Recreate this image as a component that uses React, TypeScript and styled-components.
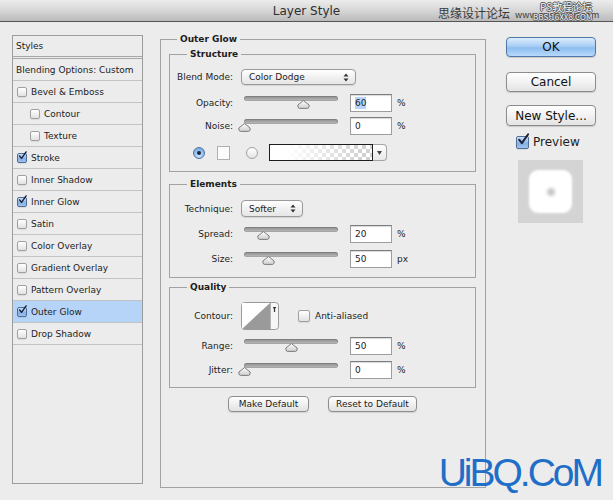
import React from "react";
import styled, { createGlobalStyle } from "styled-components";

const GlobalStyle = createGlobalStyle`
  html, body {
    margin: 0;
    padding: 0;
    background: #ececec;
  }
  body {
    font-family: "DejaVu Sans", "Noto Sans CJK SC", sans-serif;
  }
`;

const Window = styled.div`
  position: relative;
  width: 613px;
  height: 500px;
  background: #ececec;
  overflow: hidden;
  display: flex;
  flex-direction: column;
  font-family: "DejaVu Sans", "Noto Sans CJK SC", sans-serif;
  font-size: 9px;
  color: #1c1c1c;
`;

const TitleBar = styled.div`
  position: relative;
  flex: none;
  height: 21px;
  display: flex;
  align-items: center;
  justify-content: center;
  background: linear-gradient(#ececec, #d4d4d4 55%, #bababa);
  border-bottom: 1px solid #555;
  font-size: 12px;
  color: #2e2e2e;
`;

const MarkText = styled.span<{ $x: number; $y: number; $size: number; $outline?: boolean }>`
  position: absolute;
  left: ${(p) => p.$x}px;
  top: ${(p) => p.$y}px;
  font-size: ${(p) => p.$size}px;
  line-height: 1;
  white-space: nowrap;
  color: ${(p) => (p.$outline ? "#f4f4f4" : "#3a3a3a")};
  text-shadow: ${(p) =>
    p.$outline
      ? "1px 0 0 #555, -1px 0 0 #555, 0 1px 0 #555, 0 -1px 0 #555"
      : "none"};
  font-family: "Noto Sans CJK SC", "DejaVu Sans", sans-serif;
`;

const Body = styled.div`
  flex: 1;
  display: flex;
  align-items: flex-start;
  padding-left: 12px;
`;

/* ---------- left list ---------- */

const StylesList = styled.div`
  margin-top: 13px;
  width: 131px;
  height: 449px;
  box-sizing: border-box;
  border: 1px solid #9c9c9c;
  display: flex;
  flex-direction: column;
`;

const ListHeader = styled.div`
  height: 23px;
  box-sizing: border-box;
  border-bottom: 3px double #a8a8a8;
  display: flex;
  align-items: center;
  padding-left: 3px;
`;

const ListItem = styled.div<{ $indent?: boolean; $active?: boolean }>`
  height: 22px;
  box-sizing: border-box;
  border-bottom: 1px solid #c3c3c3;
  display: flex;
  align-items: center;
  gap: 4px;
  padding-left: ${(p) => (p.$indent ? 17 : 4)}px;
  background: ${(p) => (p.$active ? "#b6d4f7" : "transparent")};
`;

const PlainItem = styled(ListItem)`
  padding-left: 3px;
`;

const CheckBox = styled.span<{ $checked?: boolean; $size: number }>`
  position: relative;
  flex: none;
  width: ${(p) => p.$size}px;
  height: ${(p) => p.$size}px;
  box-sizing: border-box;
  border-radius: 2px;
  border: 1px solid ${(p) => (p.$checked ? "#4d6e98" : "#a0a0a0")};
  background: ${(p) =>
    p.$checked
      ? "linear-gradient(#cfe2f8, #86b0e2 60%, #9fc3ee)"
      : "linear-gradient(#ffffff, #e2e2e2)"};
  box-shadow: 0 1px 1px rgba(0, 0, 0, 0.08);
`;

const CheckMark = styled.svg`
  position: absolute;
  left: 0;
  top: -30%;
  width: 115%;
  height: 115%;
  overflow: visible;
  path {
    fill: none;
    stroke: #18223a;
    stroke-width: 1.9;
    stroke-linecap: round;
    stroke-linejoin: round;
  }
`;

const Check = ({ checked, size = 10 }: { checked?: boolean; size?: number }) => (
  <CheckBox $checked={checked} $size={size}>
    {checked && (
      <CheckMark viewBox="0 0 12 12">
        <path d="M2 6.4 L4.6 9.6 L10.6 1.2" />
      </CheckMark>
    )}
  </CheckBox>
);

/* ---------- main panel ---------- */

const OuterGroup = styled.fieldset`
  margin: 12px 0 0 17px;
  width: 326px;
  height: 454px;
  box-sizing: border-box;
  border: 1px solid #a2a2a2;
  padding: 4px 9px 0 8px;
  min-width: 0;
`;

const Group = styled.fieldset<{ $top: number; $pt: number; $pb: number }>`
  margin: ${(p) => p.$top}px 0 0 0;
  border: 1px solid #a2a2a2;
  padding: ${(p) => p.$pt}px 0 ${(p) => p.$pb}px 0;
  min-width: 0;
`;

const Legend = styled.legend<{ $offset: number }>`
  font-weight: bold;
  line-height: 11px;
  padding: 0 3px;
  margin-left: ${(p) => p.$offset}px;
`;

const Row = styled.div<{ $top?: number }>`
  display: flex;
  align-items: center;
  margin-top: ${(p) => p.$top ?? 0}px;
`;

const Label = styled.span`
  width: 63px;
  margin-right: 8px;
  text-align: right;
  flex: none;
`;

const Popup = styled.div<{ $w: number; $h: number }>`
  width: ${(p) => p.$w}px;
  height: ${(p) => p.$h}px;
  box-sizing: border-box;
  border: 1px solid #9a9a9a;
  border-radius: 4px;
  background: linear-gradient(#ffffff, #f1f1f1 50%, #e6e6e6);
  box-shadow: 0 1px 1px rgba(0, 0, 0, 0.1);
  display: flex;
  align-items: center;
  justify-content: space-between;
  padding: 0 6px 0 7px;
`;

const UpDown = () => (
  <svg width="6" height="9" viewBox="0 0 6 9">
    <path d="M3 0.5 L5.5 3.5 L0.5 3.5 Z M3 8.5 L5.5 5.5 L0.5 5.5 Z" fill="#333" />
  </svg>
);

const SliderBox = styled.div`
  position: relative;
  flex: none;
  width: 94px;
  height: 18px;
  margin-left: 3px;
`;

const Track = styled.div`
  position: absolute;
  left: 0;
  right: 0;
  top: 2px;
  height: 5px;
  border-radius: 3px;
  background: linear-gradient(#8c8c8c, #a9a9a9 60%, #c4c4c4);
  box-shadow: inset 0 0 0 1px rgba(0, 0, 0, 0.12);
`;

const Thumb = styled.svg`
  position: absolute;
  top: 6px;
  width: 13px;
  height: 9px;
  margin-left: -6px;
`;

const Slider = ({ at }: { at: number }) => (
  <SliderBox>
    <Track />
    <Thumb viewBox="0 0 13 9" style={{ left: `${at * 100}%` }}>
      <defs>
        <linearGradient id="thumbFill" x1="0" y1="0" x2="0" y2="1">
          <stop offset="0" stopColor="#ffffff" />
          <stop offset="1" stopColor="#cdcdcd" />
        </linearGradient>
      </defs>
      <path
        d="M6.5 0.6 L12.2 5 Q12.4 8.4 10.5 8.4 L2.5 8.4 Q0.6 8.4 0.8 5 Z"
        fill="url(#thumbFill)"
        stroke="#727272"
        strokeWidth="0.9"
      />
    </Thumb>
  </SliderBox>
);

const ValueBox = styled.div`
  flex: none;
  width: 42px;
  height: 18px;
  margin-left: 12px;
  box-sizing: border-box;
  background: #fff;
  border: 1px solid #9d9d9d;
  border-top-color: #7c7c7c;
  box-shadow: inset 0 1px 1px rgba(0, 0, 0, 0.15);
  display: flex;
  align-items: center;
  padding-left: 4px;
`;

const Selected = styled.span`
  background: #b5d4fb;
  padding: 1px 0;
`;

const Unit = styled.span`
  margin-left: 5px;
`;

const Radio = styled.span<{ $on?: boolean; $lead: number }>`
  position: relative;
  flex: none;
  width: 12px;
  height: 12px;
  margin-left: ${(p) => p.$lead}px;
  box-sizing: border-box;
  border-radius: 50%;
  border: 1px solid ${(p) => (p.$on ? "#4f729e" : "#a0a0a0")};
  background: ${(p) =>
    p.$on
      ? "radial-gradient(circle at 50% 75%, #cfe6ff, #7fb0e6 70%)"
      : "linear-gradient(#ffffff, #e4e4e4)"};
  &::after {
    content: "";
    display: ${(p) => (p.$on ? "block" : "none")};
    position: absolute;
    left: 3px;
    top: 3px;
    width: 4px;
    height: 4px;
    border-radius: 50%;
    background: #1b2740;
  }
`;

const Swatch = styled.span`
  flex: none;
  width: 13px;
  height: 14px;
  margin-left: 12px;
  box-sizing: border-box;
  border: 1px solid #b0b0b0;
  background: #fbfbfb;
`;

const GradientBar = styled.span`
  flex: none;
  width: 104px;
  height: 17px;
  margin-left: 11px;
  box-sizing: border-box;
  border: 1px solid #1e1e1e;
  background-image: linear-gradient(to right, #ffffff 15%, rgba(255, 255, 255, 0) 90%),
    repeating-conic-gradient(#d2d2d2 0 25%, #ffffff 0 50%);
  background-size: 100% 100%, 8px 8px;
`;

const GradientArrow = styled.span`
  flex: none;
  width: 14px;
  height: 17px;
  box-sizing: border-box;
  border: 1px solid #a4a4a4;
  border-left: none;
  border-radius: 0 4px 4px 0;
  background: linear-gradient(#ffffff, #e8e8e8);
  display: flex;
  align-items: center;
  justify-content: center;
`;

const SmallDown = () => (
  <svg width="5" height="4" viewBox="0 0 5 4">
    <path d="M0 0 L5 0 L2.5 4 Z" fill="#444" />
  </svg>
);

const ContourIcon = () => (
  <svg width="38" height="28" viewBox="0 0 38 28">
    <rect x="0.5" y="0.5" width="37" height="27" rx="3" fill="#f6f6f6" stroke="#9a9a9a" />
    <rect x="1" y="1" width="28" height="26" fill="#ffffff" />
    <path d="M1 27 L29 1 L29 27 Z" fill="#9a9a9a" />
    <line x1="29.5" y1="1" x2="29.5" y2="27" stroke="#b4b4b4" />
    <path d="M33.5 5 L33.5 10" stroke="#333" strokeWidth="1.2" />
    <path d="M31.8 5 L35.2 5 L33.5 8 Z" fill="#333" />
  </svg>
);

const InlineCheck = styled.span`
  display: flex;
  align-items: center;
  gap: 5px;
  margin-left: 19px;
`;

const ButtonRow = styled.div`
  margin-top: 8px;
  display: flex;
  justify-content: center;
  gap: 19px;
`;

const SmallButton = styled.button<{ $w: number }>`
  width: ${(p) => p.$w}px;
  height: 16px;
  padding: 0;
  font: inherit;
  color: inherit;
  border: 1px solid #8e8e8e;
  border-radius: 4px;
  background: linear-gradient(#ffffff, #f0f0f0 50%, #e2e2e2);
  box-shadow: 0 1px 1px rgba(0, 0, 0, 0.12);
`;

/* ---------- right column ---------- */

const SideColumn = styled.div`
  margin: 15px 0 0 20px;
  width: 90px;
  display: flex;
  flex-direction: column;
`;

const DialogButton = styled.button<{ $primary?: boolean; $top: number; $h?: number }>`
  margin-top: ${(p) => p.$top}px;
  width: 90px;
  height: ${(p) => p.$h ?? 20}px;
  padding: 0;
  font-family: "DejaVu Sans", sans-serif;
  font-size: 12px;
  color: #111;
  border-radius: 4px;
  border: 1px solid ${(p) => (p.$primary ? "#4f76a6" : "#8c8c8c")};
  background: ${(p) =>
    p.$primary
      ? "linear-gradient(#dcecfc, #a9cff5 45%, #8cbdf0 55%, #b8dafb)"
      : "linear-gradient(#ffffff, #f2f2f2 50%, #e4e4e4)"};
  box-shadow: 0 1px 1px rgba(0, 0, 0, 0.15);
`;

const PreviewToggle = styled.div`
  margin: 9px 0 0 10px;
  display: flex;
  align-items: center;
  gap: 4px;
  font-size: 12px;
`;

const PreviewBox = styled.div`
  margin: 11px 0 0 12px;
  width: 65px;
  height: 63px;
  background: #d4d4d4;
  display: flex;
  align-items: center;
  justify-content: center;
`;

const PreviewTile = styled.div`
  width: 43px;
  height: 43px;
  border-radius: 9px;
  background: #ffffff;
  filter: blur(1.2px);
  display: flex;
  align-items: center;
  justify-content: center;
`;

const PreviewDot = styled.div`
  width: 8px;
  height: 8px;
  border-radius: 50%;
  background: #c9c9c9;
  filter: blur(1px);
`;

const Watermark = styled.div`
  position: absolute;
  right: 12px;
  bottom: 8px;
  font-family: "Liberation Sans", Arial, sans-serif;
  font-size: 39px;
  letter-spacing: -3px;
  line-height: 1;
  color: #1f6ec8;
`;

const layers = [
  { name: "Bevel & Emboss" },
  { name: "Contour", indent: true },
  { name: "Texture", indent: true },
  { name: "Stroke", checked: true },
  { name: "Inner Shadow" },
  { name: "Inner Glow", checked: true },
  { name: "Satin" },
  { name: "Color Overlay" },
  { name: "Gradient Overlay" },
  { name: "Pattern Overlay" },
  { name: "Outer Glow", checked: true, active: true },
  { name: "Drop Shadow" },
];

export default function App() {
  return (
    <Window>
      <GlobalStyle />
      <TitleBar>
        Layer Style
        <MarkText $x={438} $y={7} $size={12}>
          思缘设计论坛
        </MarkText>
        <MarkText $x={515} $y={10} $size={9}>
          www.missyuan.com
        </MarkText>
        <MarkText $x={540} $y={2} $size={10} $outline>
          PS教程论坛
        </MarkText>
        <MarkText $x={533} $y={13} $size={8} $outline>
          BBS.16XX8.COM
        </MarkText>
      </TitleBar>
      <Body>
        <StylesList>
          <ListHeader>Styles</ListHeader>
          <PlainItem>Blending Options: Custom</PlainItem>
          {layers.map((l) => (
            <ListItem key={l.name} $indent={l.indent} $active={l.active}>
              <Check checked={l.checked} />
              {l.name}
            </ListItem>
          ))}
        </StylesList>

        <OuterGroup>
          <Legend $offset={8}>Outer Glow</Legend>

          <Group $top={0} $pt={9} $pb={10}>
            <Legend $offset={17}>Structure</Legend>
            <Row>
              <Label>Blend Mode:</Label>
              <Popup $w={115} $h={16}>
                Color Dodge
                <UpDown />
              </Popup>
            </Row>
            <Row $top={9}>
              <Label>Opacity:</Label>
              <Slider at={0.63} />
              <ValueBox>
                <Selected>60</Selected>
              </ValueBox>
              <Unit>%</Unit>
            </Row>
            <Row $top={5}>
              <Label>Noise:</Label>
              <Slider at={0} />
              <ValueBox>0</ValueBox>
              <Unit>%</Unit>
            </Row>
            <Row $top={9}>
              <Radio $on $lead={23} />
              <Swatch />
              <Radio $lead={16} />
              <GradientBar />
              <GradientArrow>
                <SmallDown />
              </GradientArrow>
            </Row>
          </Group>

          <Group $top={7} $pt={10} $pb={9}>
            <Legend $offset={17}>Elements</Legend>
            <Row>
              <Label>Technique:</Label>
              <Popup $w={62} $h={17}>
                Softer
                <UpDown />
              </Popup>
            </Row>
            <Row $top={8}>
              <Label>Spread:</Label>
              <Slider at={0.2} />
              <ValueBox>20</ValueBox>
              <Unit>%</Unit>
            </Row>
            <Row $top={7}>
              <Label>Size:</Label>
              <Slider at={0.25} />
              <ValueBox>50</ValueBox>
              <Unit>px</Unit>
            </Row>
          </Group>

          <Group $top={4} $pt={9} $pb={8}>
            <Legend $offset={17}>Quality</Legend>
            <Row>
              <Label>Contour:</Label>
              <ContourIcon />
              <InlineCheck>
                <Check size={12} />
                Anti-aliased
              </InlineCheck>
            </Row>
            <Row $top={7}>
              <Label>Range:</Label>
              <Slider at={0.5} />
              <ValueBox>50</ValueBox>
              <Unit>%</Unit>
            </Row>
            <Row $top={6}>
              <Label>Jitter:</Label>
              <Slider at={0} />
              <ValueBox>0</ValueBox>
              <Unit>%</Unit>
            </Row>
          </Group>

          <ButtonRow>
            <SmallButton $w={81}>Make Default</SmallButton>
            <SmallButton $w={89}>Reset to Default</SmallButton>
          </ButtonRow>
        </OuterGroup>

        <SideColumn>
          <DialogButton $primary $top={0}>
            OK
          </DialogButton>
          <DialogButton $top={15}>Cancel</DialogButton>
          <DialogButton $top={13} $h={21}>
            New Style...
          </DialogButton>
          <PreviewToggle>
            <Check checked size={13} />
            Preview
          </PreviewToggle>
          <PreviewBox>
            <PreviewTile>
              <PreviewDot />
            </PreviewTile>
          </PreviewBox>
        </SideColumn>
      </Body>
      <Watermark>UiBQ.CoM</Watermark>
    </Window>
  );
}
